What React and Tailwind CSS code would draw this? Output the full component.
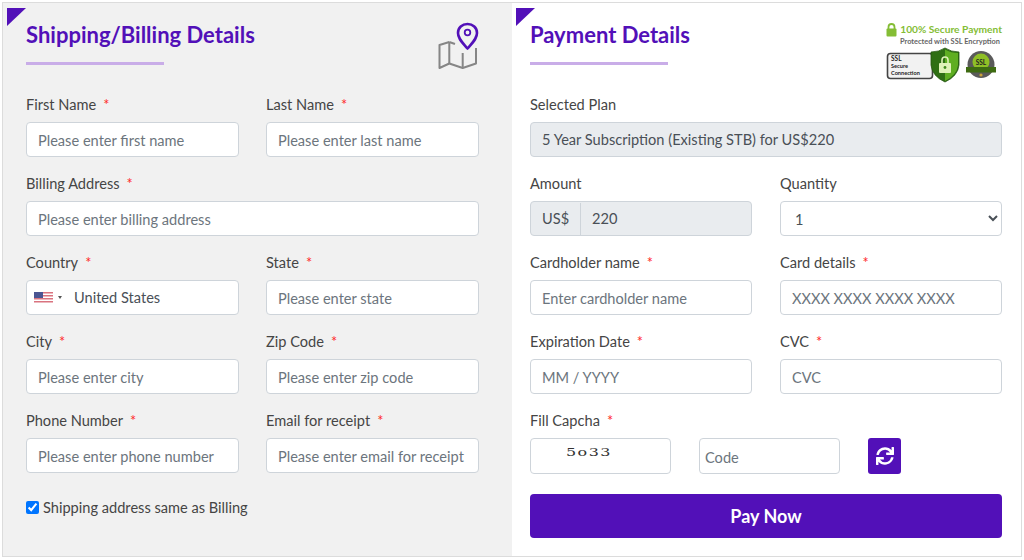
import React from "react";
import { FaSync } from "react-icons/fa";

const inputClass =
  "w-full h-[35px] rounded-[4px] border border-[#ced4da] bg-white px-[11px] pt-[1px] text-[14.6px] text-[#495057] outline-none placeholder:text-[#6c757d]";

const Label = ({ text, required }) => (
  <label className="block h-[18px] leading-[20px] mb-[9px] text-[14.6px] text-[#454545]">
    {text}
    {required && <span className="ml-[7px] text-[#ff2a2a]">*</span>}
  </label>
);

const Field = ({ label, placeholder, required = true }) => (
  <div className="mb-[17px]">
    <Label text={label} required={required} />
    <input className={inputClass} placeholder={placeholder} />
  </div>
);

const Corner = () => (
  <div className="absolute left-[4px] top-[5px] w-[19px] h-[18px] bg-[#5210b8] [clip-path:polygon(0_0,100%_0,0_100%)]" />
);

const Heading = ({ title }) => (
  <div>
    <h2 className="h-[40px] pt-[1px] text-[22px] leading-[40px] font-bold text-[#5210b8]">{title}</h2>
    <div className="mt-[8px] w-[138px] h-[3px] bg-[#c9ade8]" />
  </div>
);

const MapIcon = () => (
  <svg width="42" height="48" viewBox="0 0 42 48" fill="none" className="mt-[8px]">
    <path d="M12.3 20 L2.5 23 V46 L12.3 41.5 L25.7 46 L39 41.5 V26" stroke="#868686" strokeWidth="2" strokeLinejoin="round" />
    <path d="M12.3 20 V41.5 M12.3 20 L18 22 M25.7 31 V46" stroke="#868686" strokeWidth="2" />
    <path d="M30.5 26.5 C25 20 21 16.5 21 11 C21 5.5 25.2 2 30.5 2 C35.8 2 40 5.5 40 11 C40 16.5 36 20 30.5 26.5 Z" fill="#f1f1f1" stroke="#5210b8" strokeWidth="2.6" strokeLinejoin="round" />
    <circle cx="30.5" cy="10.5" r="2.8" stroke="#5210b8" strokeWidth="1.8" />
  </svg>
);

const Flag = () => (
  <svg width="19" height="11" viewBox="0 0 19 11">
    <rect width="19" height="11" fill="#fff" />
    <path d="M0 0.8H19M0 3.8H19M0 6.8H19M0 9.8H19" stroke="#d9737f" strokeWidth="1.6" />
    <rect width="9" height="6" fill="#4a5592" />
  </svg>
);

const SecureBadge = () => (
  <div className="flex flex-col items-end w-[116px]">
    <div className="flex items-center h-[15px]">
      <svg width="11" height="14" viewBox="0 0 11 14">
        <path d="M2.5 6V4a3 3 0 0 1 6 0v2" fill="none" stroke="#84bd35" strokeWidth="1.8" />
        <rect x="0.5" y="5.5" width="10" height="8" rx="1" fill="#84bd35" />
      </svg>
      <span className="ml-[3px] text-[10.2px] font-bold text-[#84bd35] whitespace-nowrap">100% Secure Payment</span>
    </div>
    <div className="pr-[2px] text-[7.4px] leading-[10px] font-bold text-[#666] whitespace-nowrap">Protected with SSL Encryption</div>
    <svg width="116" height="36" viewBox="0 0 116 36">
      <rect x="1.5" y="6.5" width="45" height="25" rx="3" fill="#f2f2f2" stroke="#444" strokeWidth="1.6" />
      <text x="5" y="14" fontSize="6.5" fontWeight="700" fill="#222">SSL</text>
      <text x="5" y="21" fontSize="5.6" fontWeight="700" fill="#222">Secure</text>
      <text x="5" y="28" fontSize="5.6" fontWeight="700" fill="#222">Connection</text>
      <path d="M45 5 Q53 5 59 1 Q65 5 73 5 V18 Q72 29 59 35 Q46 29 45 18 Z" fill="#2f6f14" stroke="#245510" strokeWidth="0.8" />
      <path d="M59 2.5 Q65 6 72 6 V18 Q71 28 59 34 Z" fill="#5fae22" />
      <rect x="53" y="16" width="12" height="10" rx="1" fill="#dff2b8" />
      <path d="M56 16V13a3 3 0 0 1 6 0v3" fill="none" stroke="#dff2b8" strokeWidth="1.6" />
      <circle cx="59" cy="20.5" r="1.4" fill="#3f8a1c" />
      <circle cx="95" cy="17.5" r="13.5" fill="#5a5a5a" />
      <circle cx="95" cy="15" r="8.5" fill="#8fbf26" />
      <text x="95" y="17.5" textAnchor="middle" fontSize="6.5" fontWeight="700" fill="#222">SSL</text>
      <rect x="80" y="20" width="30" height="5.5" fill="#3e6b12" />
      <circle cx="95" cy="28" r="1.6" fill="#c9a23a" />
    </svg>
  </div>
);

export default function App() {
  return (
    <div className="ml-[2px] mt-[2px] w-[1020px] h-[555px] flex border border-[#dcdcdc] bg-white font-[Lato,sans-serif]">
      {/* Shipping */}
      <section className="relative w-[509px] h-full bg-[#f1f1f1] pl-[23px] pr-[33px] pt-[11px]">
        <Corner />
        <div className="flex justify-between items-start h-[81px]">
          <Heading title="Shipping/Billing Details" />
          <MapIcon />
        </div>
        <div className="grid grid-cols-2 gap-x-[27px]">
          <Field label="First Name" placeholder="Please enter first name" />
          <Field label="Last Name" placeholder="Please enter last name" />
          <div className="col-span-2">
            <Field label="Billing Address" placeholder="Please enter billing address" />
          </div>
          <div className="mb-[17px]">
            <Label text="Country" required />
            <div className="flex items-center w-full h-[35px] rounded-[4px] border border-[#ced4da] bg-white pl-[7px] text-[14.6px] text-[#495057]">
              <Flag />
              <span className="ml-[5px] w-0 h-0 border-x-[2.5px] border-x-transparent border-t-[3px] border-t-[#555]" />
              <span className="ml-[12px]">United States</span>
            </div>
          </div>
          <Field label="State" placeholder="Please enter state" />
          <Field label="City" placeholder="Please enter city" />
          <Field label="Zip Code" placeholder="Please enter zip code" />
          <Field label="Phone Number" placeholder="Please enter phone number" />
          <Field label="Email for receipt" placeholder="Please enter email for receipt" />
        </div>
        <label className="flex items-center mt-[8px] h-[18px] text-[14.6px] text-[#454545]">
          <input type="checkbox" defaultChecked className="w-[13px] h-[13px] m-0 mr-[4px]" />
          <span className="pt-[1px]">Shipping address same as Billing</span>
        </label>
      </section>

      {/* Payment */}
      <section className="relative flex-1 h-full pl-[18px] pr-[19px] pt-[11px]">
        <Corner />
        <div className="flex justify-between items-start h-[81px]">
          <Heading title="Payment Details" />
          <div className="mt-[8px]">
            <SecureBadge />
          </div>
        </div>
        <div className="mb-[17px]">
          <Label text="Selected Plan" />
          <div className="flex items-center h-[35px] rounded-[4px] border border-[#ced4da] bg-[#e9ecef] px-[11px] pt-[1px] text-[14.6px] text-[#495057]">
            5 Year Subscription (Existing STB) for US$220
          </div>
        </div>
        <div className="grid grid-cols-2 gap-x-[28px]">
          <div className="mb-[17px]">
            <Label text="Amount" />
            <div className="flex h-[35px] rounded-[4px] border border-[#ced4da] bg-[#e9ecef] pt-[1px] text-[14.6px] text-[#495057]">
              <span className="flex items-center w-[50px] pl-[11px] border-r border-[#ced4da]">US$</span>
              <span className="flex items-center pl-[11px]">220</span>
            </div>
          </div>
          <div className="mb-[17px]">
            <Label text="Quantity" />
            <select className="w-full h-[35px] rounded-[4px] border border-[#ced4da] bg-white pl-[10px] pt-[1px] text-[14.6px] text-[#495057] outline-none">
              <option>1</option>
            </select>
          </div>
          <Field label="Cardholder name" placeholder="Enter cardholder name" />
          <Field label="Card details" placeholder="XXXX XXXX XXXX XXXX" />
          <Field label="Expiration Date" placeholder="MM / YYYY" />
          <Field label="CVC" placeholder="CVC" />
        </div>
        <Label text="Fill Capcha" required />
        <div className="flex items-start gap-x-[28px]">
          <div className="w-[141px] h-[36px] rounded-[4px] border border-[#ced4da] bg-white pl-[35px] font-['DejaVu_Serif',serif] text-[11px] leading-[27px] tracking-[1px] text-[#333]">
            <span className="inline-block origin-left scale-x-[1.45]">5o33</span>
          </div>
          <input className="w-[141px] h-[36px] rounded-[4px] border border-[#ced4da] bg-white pl-[5px] pt-[2px] text-[14.6px] outline-none placeholder:text-[#6c757d]" placeholder="Code" />
          <button className="flex items-center justify-center w-[33px] h-[36px] rounded-[3px] bg-[#5210b8] text-white">
            <FaSync size={18} />
          </button>
        </div>
        <button className="mt-[20px] w-full h-[44px] rounded-[4px] bg-[#5210b8] text-white text-[18px] font-bold">
          Pay Now
        </button>
      </section>
    </div>
  );
}
